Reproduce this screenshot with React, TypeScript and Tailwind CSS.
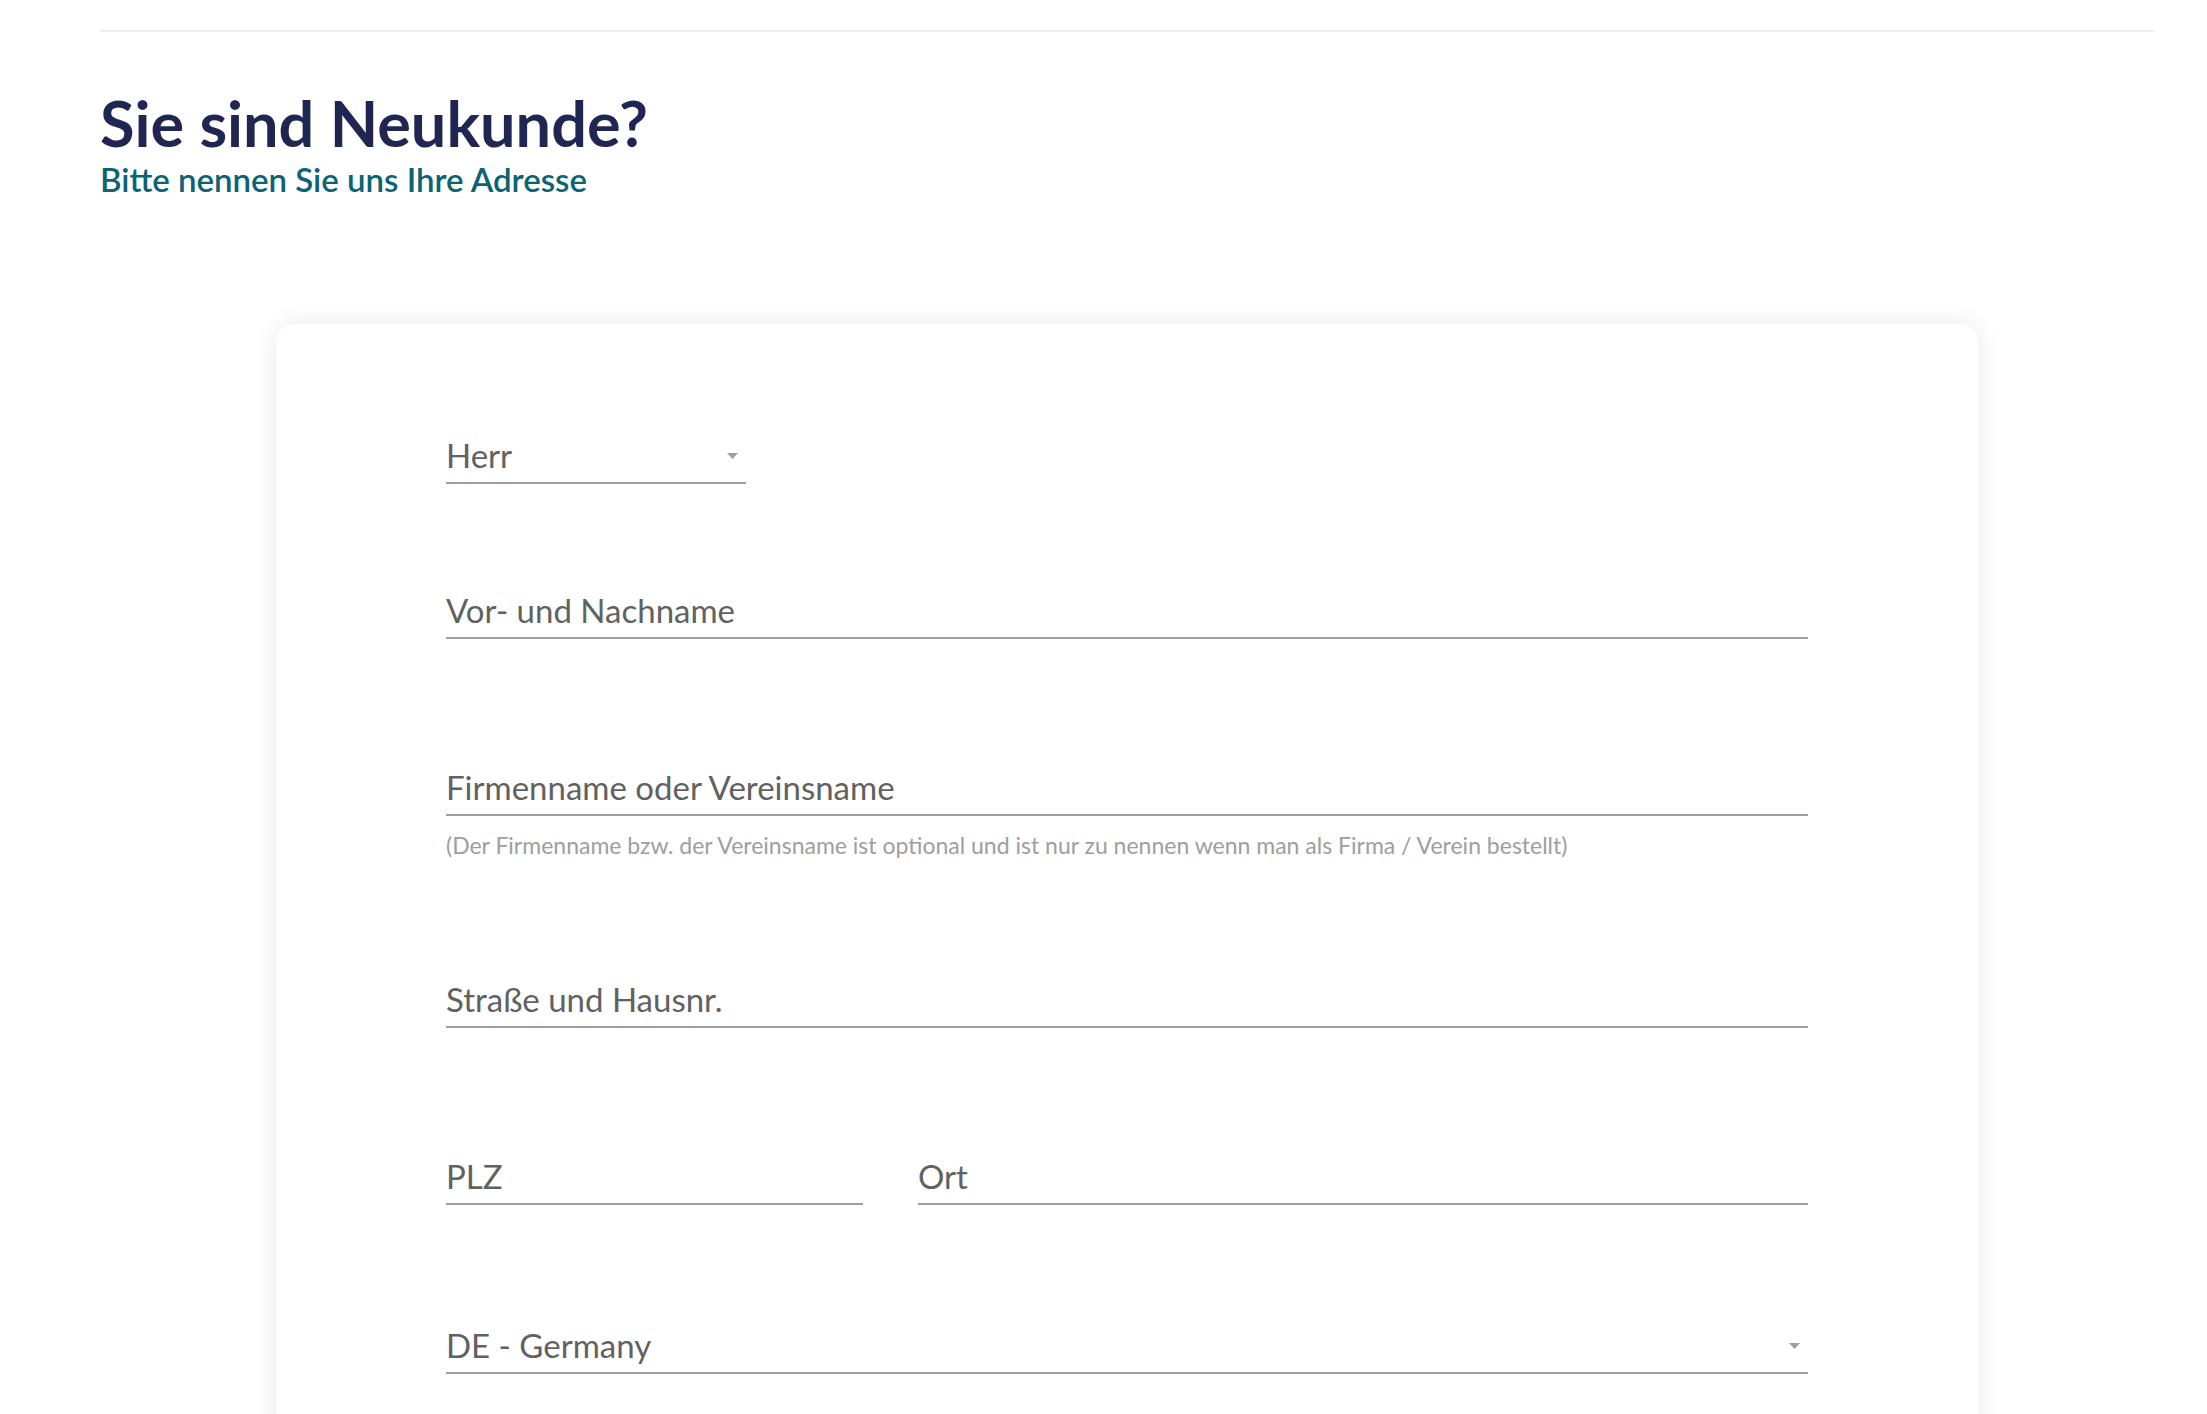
import React from "react";

type FieldProps = {
  label: string;
  arrow?: boolean;
  className?: string;
};

function Field({ label, arrow = false, className = "" }: FieldProps) {
  return (
    <div
      className={`relative h-[48px] border-b-2 border-[#9e9e9e] pt-[3px] pb-3 ${className}`}
    >
      <span className="block text-[33px] leading-none text-[#616161]">
        {label}
      </span>
      {arrow && (
        <svg
          className="absolute right-[8px] top-[17px]"
          width="11"
          height="6"
          viewBox="0 0 11 6"
        >
          <path d="M0 0h11L5.5 6z" fill="#9e9e9e" />
        </svg>
      )}
    </div>
  );
}

export default function App() {
  return (
    <div className="min-h-screen bg-white font-['Lato',sans-serif]">
      <div className="ml-[100px] w-[2054px] pt-[30px]">
        {/* divider */}
        <div className="h-[2px] bg-[#eeeeee]" />

        <h1 className="mt-[59px] text-[63px] font-bold leading-none text-[#1f2651]">
          Sie sind Neukunde?
        </h1>
        <p className="mt-[9px] text-[33px] font-semibold leading-none text-[#0b6474]">
          Bitte nennen Sie uns Ihre Adresse
        </p>

        {/* address card */}
        <div className="mx-[176px] mt-[128px] rounded-[18px] bg-white px-[170px] pb-[120px] pt-[112px] shadow-[0_0_26px_rgba(0,0,0,0.09)]">
          <Field label="Herr" arrow className="w-[300px]" />

          <Field label="Vor- und Nachname" className="mt-[107px]" />

          <Field label="Firmenname oder Vereinsname" className="mt-[129px]" />
          <p className="mt-[18px] text-[23px] leading-none text-[#9e9e9e]">
            (Der Firmenname bzw. der Vereinsname ist optional und ist nur zu
            nennen wenn man als Firma / Verein bestellt)
          </p>

          <Field label="Straße und Hausnr." className="mt-[123px]" />

          <div className="mt-[129px] flex gap-[55px]">
            <Field label="PLZ" className="w-[417px] shrink-0" />
            <Field label="Ort" className="flex-1" />
          </div>

          <Field label="DE - Germany" arrow className="mt-[121px]" />
        </div>
      </div>
    </div>
  );
}
